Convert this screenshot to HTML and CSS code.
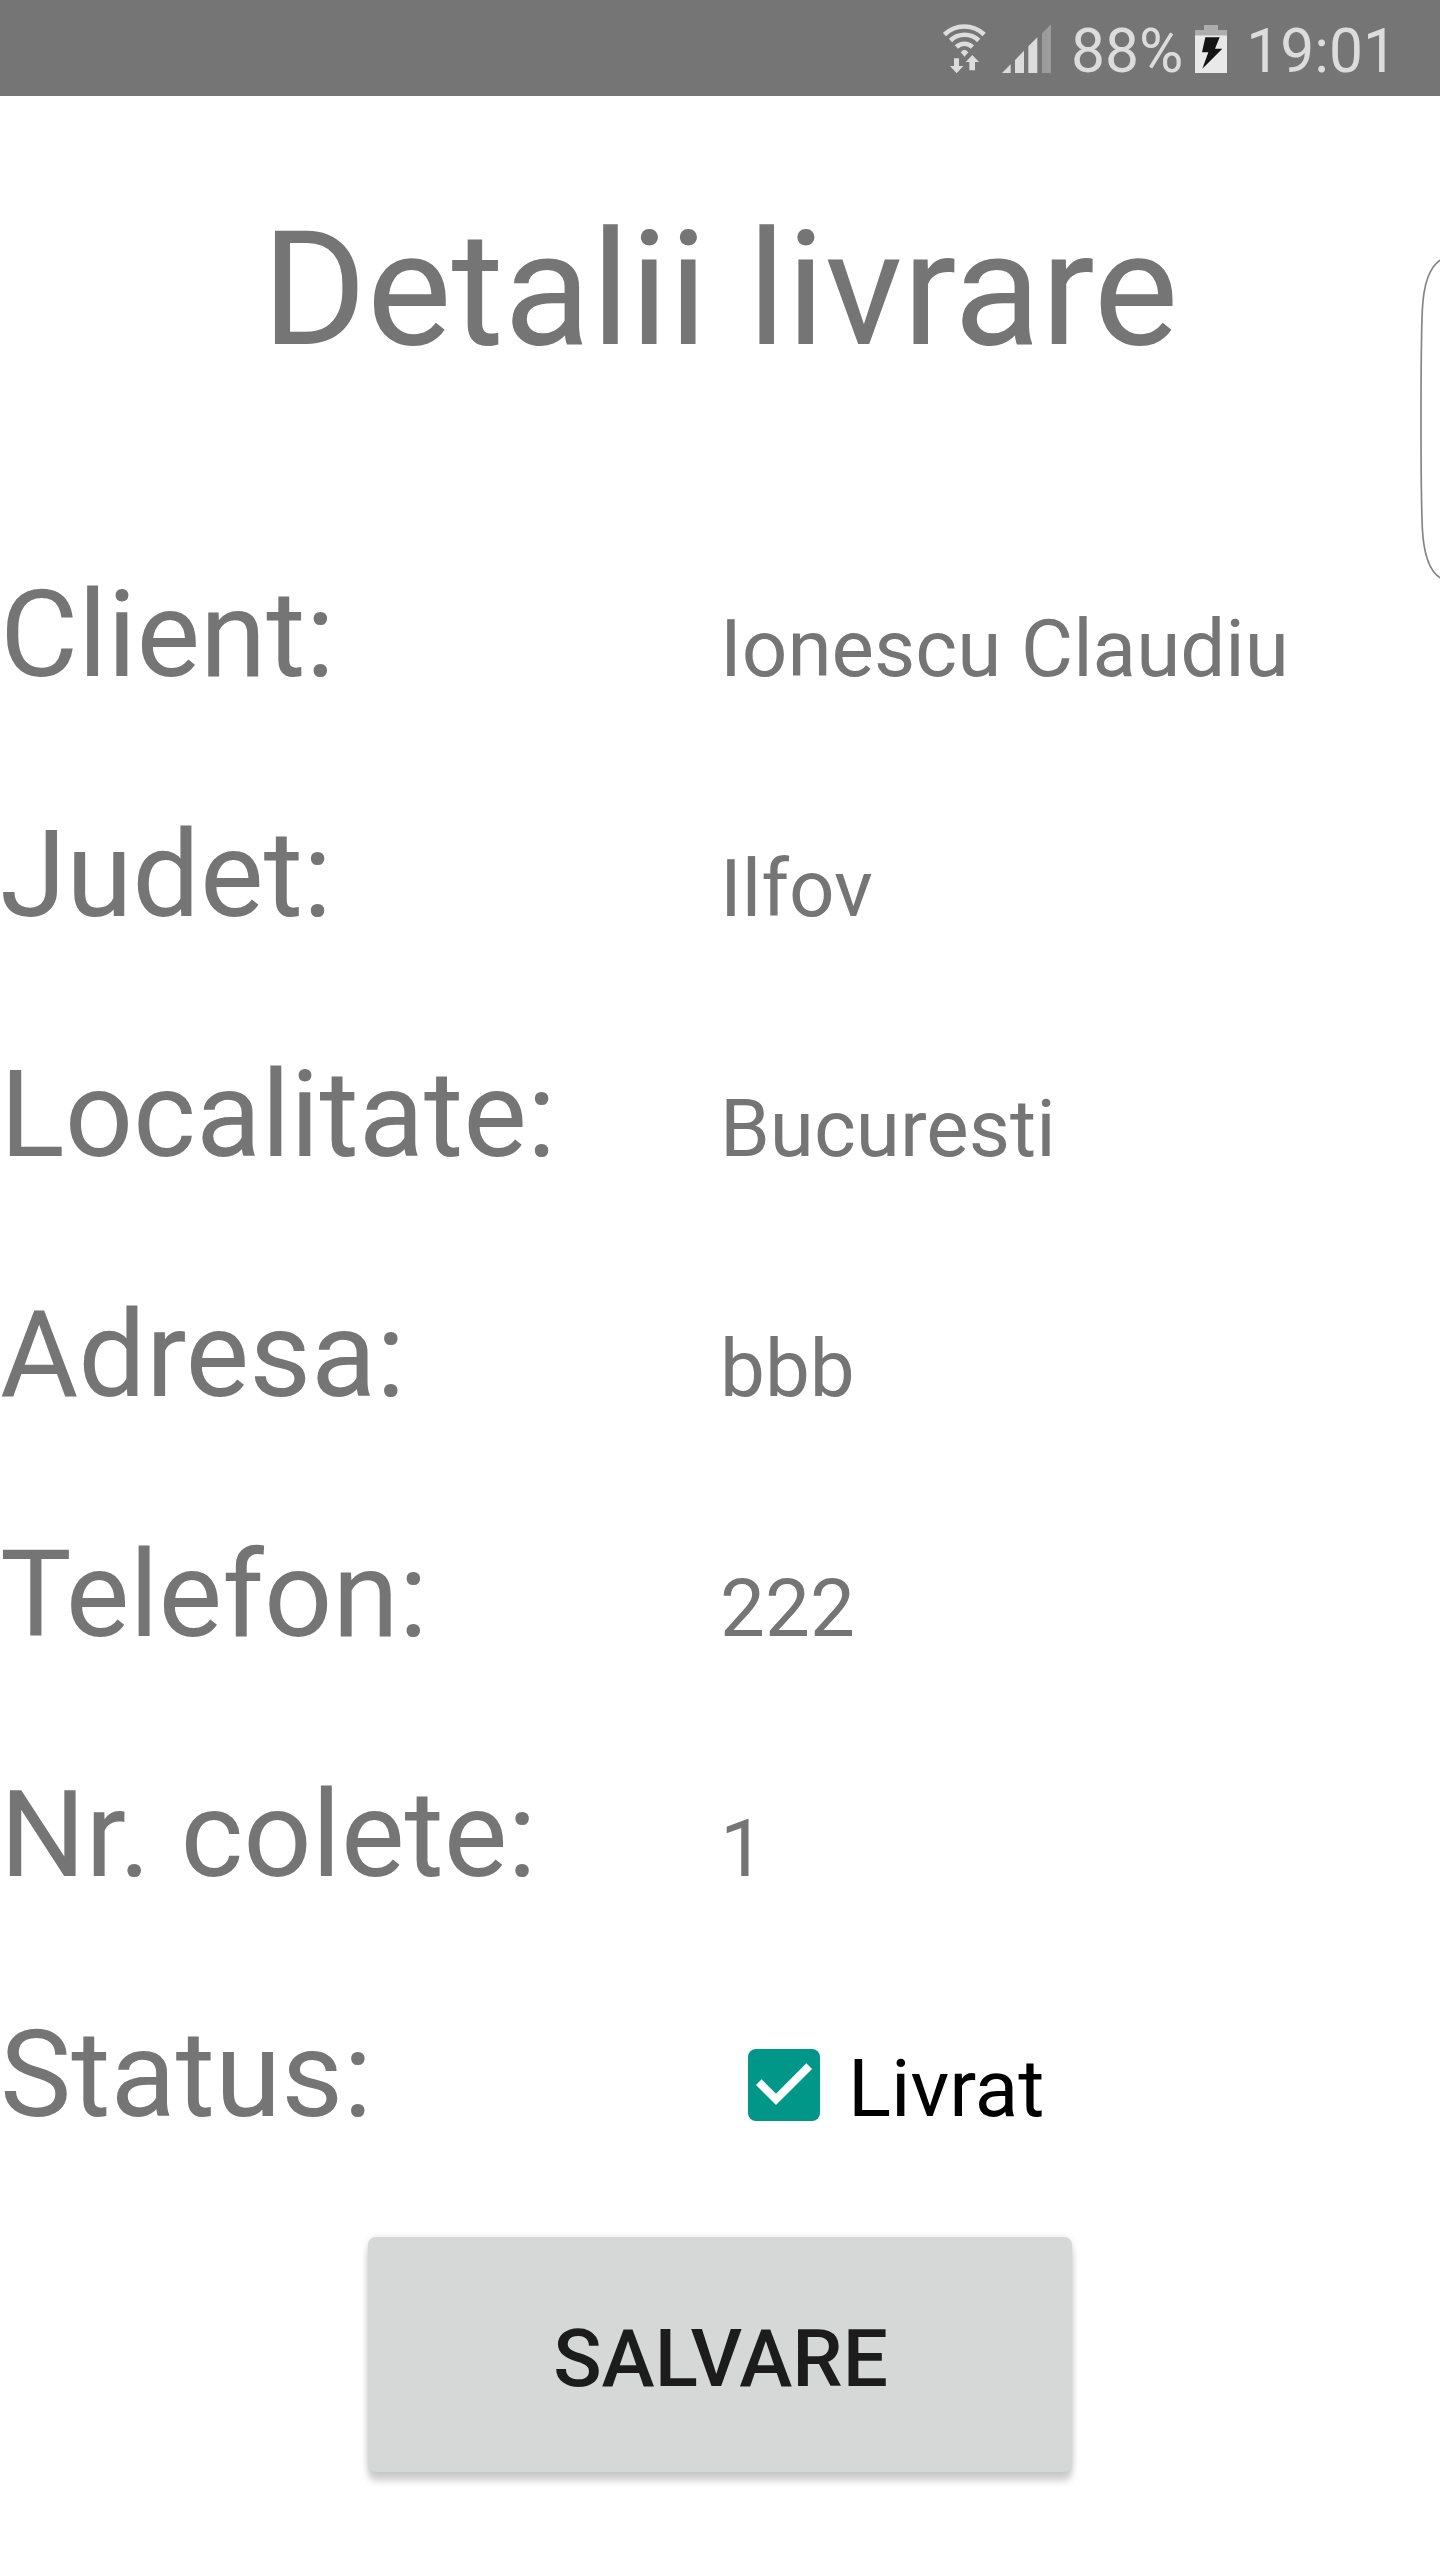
FILE: index.html
```html
<!DOCTYPE html>
<html lang="ro">
<head>
<meta charset="utf-8">
<title>Detalii livrare</title>
<link rel="stylesheet" href="styles.css">
</head>
<body>
<header class="status-bar">
  <svg class="wifi" viewBox="69 72 129 150" aria-hidden="true">
    <g fill="none" stroke="#dcdcdc">
      <path stroke-width="14" d="M73.500 103.500A85.500 85.500 0 0 1 192.500 103.500"/>
      <path stroke-width="14" d="M91.500 121.500A60.500 60.500 0 0 1 176 121.500"/>
      <path stroke-width="14" d="M109 141A35 35 0 0 1 157.500 141"/>
    </g>
    <path fill="#dcdcdc" d="M122 157Q133 142 145 157L133.500 170ZM102 175H117V198H130L110 220L90 198H102ZM148 211V186H137L157 165L177 186H165V211Z"/>
  </svg>
  <svg class="signal" viewBox="246 72 147 150" aria-hidden="true">
    <path fill="#dcdcdc" d="M246 219L272 193V219ZM285 219V180L312 152V219ZM325 219V139L352 112V219Z"/>
    <path fill="#9c9c9c" d="M366 219V100L393 73V219Z"/>
  </svg>
  <span class="percent">88%</span>
  <svg class="battery" viewBox="105 72 96 150" aria-hidden="true">
    <path fill="#adadad" d="M132 75H174V90H201V106H105V90H132Z"/>
    <path fill="#e9e9e9" d="M105 106H201V219H105Z"/>
    <path fill="#141414" d="M136 112H179L165 146H187L127 206L145 157H126Z"/>
  </svg>
  <span class="clock">19:01</span>
</header>
<main>
  <h1>Detalii livrare</h1>
  <dl class="details">
    <div class="row"><dt>Client:</dt><dd>Ionescu Claudiu</dd></div>
    <div class="row"><dt>Judet:</dt><dd>Ilfov</dd></div>
    <div class="row"><dt>Localitate:</dt><dd>Bucuresti</dd></div>
    <div class="row"><dt>Adresa:</dt><dd>bbb</dd></div>
    <div class="row"><dt>Telefon:</dt><dd>222</dd></div>
    <div class="row"><dt>Nr. colete:</dt><dd>1</dd></div>
    <div class="row">
      <dt>Status:</dt>
      <dd class="check">
        <svg class="box" viewBox="0 0 72 72" aria-hidden="true"><rect width="72" height="72" rx="8" fill="#009688"/><path d="M10.800 33.200L28 50.400L61.200 17.200" fill="none" stroke="#fff" stroke-width="8"/></svg>
        <span>Livrat</span>
      </dd>
    </div>
  </dl>
  <button class="save">SALVARE</button>
</main>
<svg class="edge-handle" viewBox="114 75 66 990" aria-hidden="true">
  <path d="M184 88C142 112 130 175 127 240Q123 330 123 567Q123 804 127 894C130 959 142 1022 184 1046" fill="none" stroke="#848484" stroke-width="5"/>
</svg>
</body>
</html>
```
FILE: styles.css
```css
* { box-sizing: border-box; }
body {
  position: relative;
  margin: 0;
  width: 1440px;
  height: 2560px;
  background: #fff;
  color: #757575;
  font-family: Roboto, sans-serif;
  overflow: hidden;
}
.status-bar {
  height: 96px;
  background: #757575;
  display: flex;
  justify-content: flex-end;
  padding-right: 43px;
  font-size: 60.5px;
  line-height: 103px;
  color: #dcdcdc;
}
.status-bar svg { height: 50px; margin-top: 24px; flex: none; }
.wifi { width: 43px; margin-right: 16px; }
.signal { width: 49px; margin-right: 20px; }
.battery { width: 32px; margin: 0 19px 0 12px; }
h1 {
  margin: 100px 0 0;
  line-height: 188px;
  font-size: 160px;
  font-weight: 400;
  text-align: center;
}
.details { margin: 171px 0 0; }
.row { display: flex; align-items: baseline; height: 240px; }
dt { width: 720px; font-size: 120px; line-height: 160px; }
dd { margin: 0; font-size: 80px; }
.check {
  display: flex;
  align-self: flex-start;
  gap: 28px;
  margin-top: 47px;
  padding-left: 28px;
  color: #000;
}
.box { width: 72px; height: 72px; margin-top: 7px; }
.save {
  display: block;
  margin: 2px auto 0;
  padding: 8px 0 0 1px;
  width: 704px;
  height: 235px;
  border: 0;
  border-radius: 8px;
  background: #d6d8d7;
  box-shadow: 0 9px 7px rgba(0, 0, 0, .19), 0 0 6px rgba(0, 0, 0, .1);
  font: 500 80px Roboto, sans-serif;
  color: #1c1c1c;
}
.edge-handle { position: absolute; right: 0; top: 255px; width: 22px; height: 330px; }
```
